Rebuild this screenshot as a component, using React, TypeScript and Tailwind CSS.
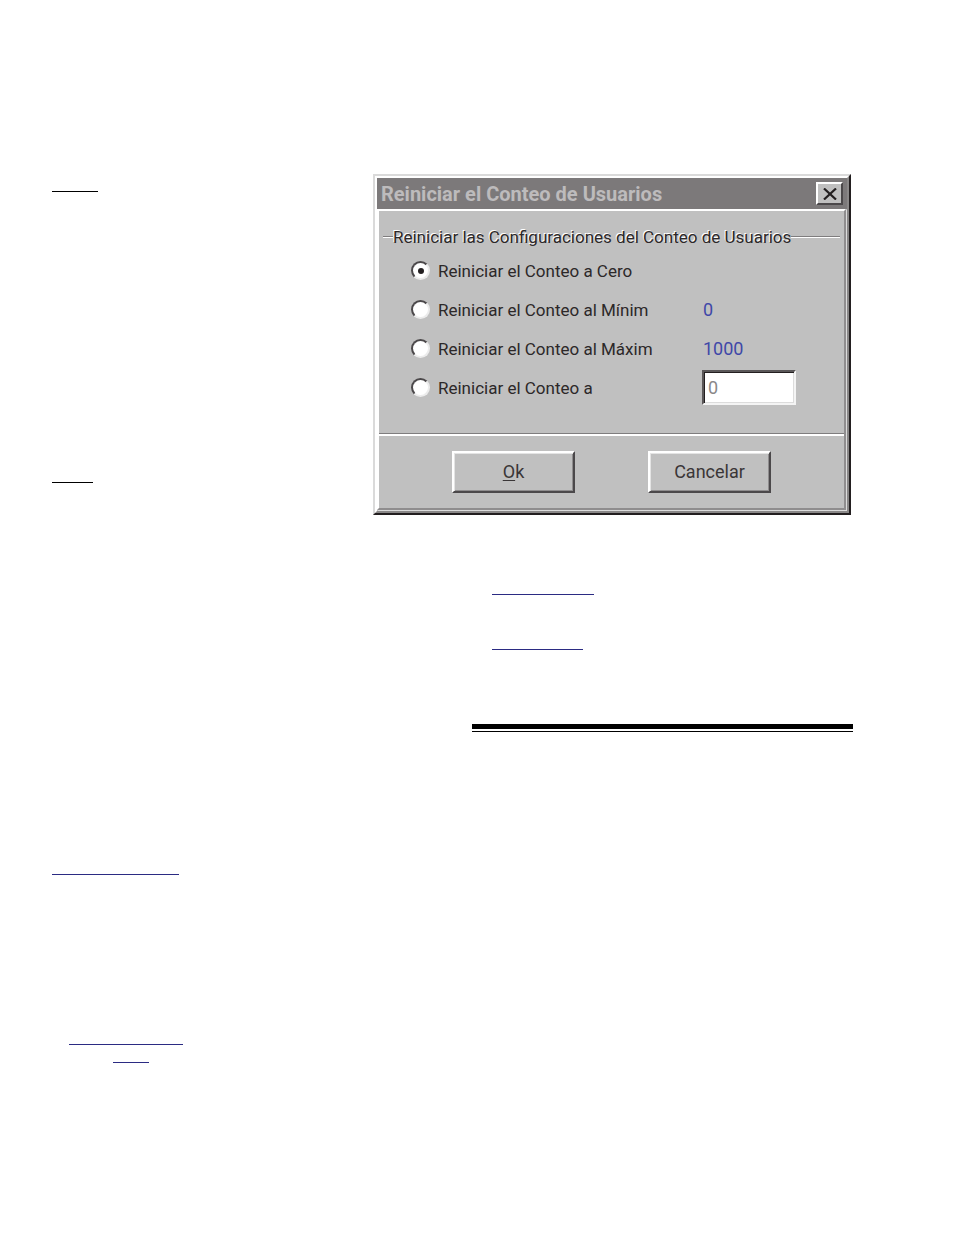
import { useState } from 'react';

const options = [
  { id: 'zero', label: 'Reiniciar el Conteo a Cero' },
  { id: 'min', label: 'Reiniciar el Conteo al Mínim', value: '0' },
  { id: 'max', label: 'Reiniciar el Conteo al Máxim', value: '1000' },
  { id: 'custom', label: 'Reiniciar el Conteo a' },
];

const buttonClass =
  'h-[42px] w-[123px] border-2 border-t-white border-l-white border-r-[#4b484a] border-b-[#4b484a] bg-[#c0c0c0] text-[18px] leading-6 text-[#3a3637] shadow-[inset_1px_1px_0_#e4e4e4,inset_-1px_-1px_0_#8f8d8e]';

const ResetDialog = () => {
  const [selected, setSelected] = useState('zero');
  const [custom, setCustom] = useState('0');

  return (
    <section
      role="dialog"
      aria-labelledby="dialog-title"
      className="mr-0.5 border-2 border-t-[#dadada] border-r-[#231f20] border-b-[#231f20] border-l-[#dadada] bg-[#c0c0c0] font-['Roboto',sans-serif] text-[17px] leading-6 text-[#2c2829]"
    >
      <div className="border-2 border-t-white border-r-[#8a8888] border-b-[#8a8888] border-l-white">
        <header className="flex h-[31px] items-center justify-between bg-[#7c797a] pr-1 pl-1">
          <h1 id="dialog-title" className="text-[20px] font-bold text-[#bdbbbc]">
            Reiniciar el Conteo de Usuarios
          </h1>
          <button
            type="button"
            aria-label="Cerrar"
            className="grid h-[23px] w-[27px] place-items-center border-2 border-t-white border-r-[#4b484a] border-b-[#4b484a] border-l-white bg-[#c0c0c0]"
          >
            <svg viewBox="0 0 14 12" className="h-3 w-3.5" stroke="#231f20" strokeWidth="2.2" aria-hidden="true">
              <path d="M1 0.5 L13 11.5 M13 0.5 L1 11.5" />
            </svg>
          </button>
        </header>

        <div className="mr-px mb-px border-2 border-t-white border-r-[#8f8d8e] border-b-[#8f8d8e] border-l-white shadow-[1px_1px_0_#dcdcdc]">
          <fieldset className="h-[222px] min-w-0 pt-3.5">
            <legend className="float-left flex h-6 w-full items-center pr-1 pl-1">
              <span className="h-0.5 w-2.5 border-t border-[#7f7d7e] bg-white" />
              <span className="whitespace-nowrap [text-shadow:-1px_-1px_0_#fff]">
                Reiniciar las Configuraciones del Conteo de Usuarios
              </span>
              <span className="h-0.5 flex-1 border-t border-[#7f7d7e] bg-white" />
            </legend>
            <div className="clear-both pt-0.5 pl-8">
              {options.map((option) => (
                <div key={option.id} className="flex h-[39px] items-center">
                  <input
                    type="radio"
                    name="reset"
                    id={option.id}
                    checked={selected === option.id}
                    onChange={() => setSelected(option.id)}
                    className="mr-2 grid size-[19px] shrink-0 appearance-none place-items-center rounded-full border-2 border-t-[#4b484a] border-r-[#ececec] border-b-[#ececec] border-l-[#4b484a] bg-white before:size-1.5 before:rounded-full checked:before:bg-[#231f20]"
                  />
                  <label htmlFor={option.id} className="w-[215px] whitespace-nowrap">
                    {option.label}
                  </label>
                  {option.value && <output className="ml-[50px] text-[18px] text-[#3f48a8]">{option.value}</output>}
                  {option.id === 'custom' && (
                    <input
                      type="text"
                      aria-label="Valor del conteo"
                      value={custom}
                      onChange={(e) => setCustom(e.target.value)}
                      className="ml-[49px] h-[35px] w-[94px] border-2 border-t-[#5a5758] border-r-[#f4f4f4] border-b-[#f4f4f4] border-l-[#5a5758] bg-white px-1 text-[18px] text-[#8a8888] shadow-[inset_1px_1px_0_#231f20,inset_-1px_-1px_0_#dcdcdc]"
                    />
                  )}
                </div>
              ))}
            </div>
          </fieldset>
          <hr className="h-[3px] border-t border-[#7f7d7e] bg-white" />
          <footer className="flex h-[72px] items-center justify-evenly">
            <button type="button" className={buttonClass}>
              <u className="underline-offset-2">O</u>k
            </button>
            <button type="button" className={buttonClass}>
              Cancelar
            </button>
          </footer>
        </div>
      </div>
    </section>
  );
};

const App = () => (
  <main className="grid min-h-screen grid-cols-[321px_minmax(0,1fr)] bg-white pr-[101px] pl-[52px]">
    <aside className="pt-[191px]">
      <hr className="h-px w-[46px] border-0 bg-black" />
      <hr className="mt-[290px] h-px w-[41px] border-0 bg-black" />
      <hr className="mt-[391px] h-px w-[127px] border-0 bg-[#2b2b83]" />
      <hr className="mt-[169px] ml-[17px] h-px w-[114px] border-0 bg-[#2b2b83]" />
      <hr className="mt-[17px] ml-[61px] h-px w-9 border-0 bg-[#2b2b83]" />
    </aside>
    <div className="pt-[174px]">
      <ResetDialog />
      <hr className="mt-[79px] ml-[119px] h-px w-[102px] border-0 bg-[#2b2b83]" />
      <hr className="mt-[54px] ml-[119px] h-px w-[91px] border-0 bg-[#2b2b83]" />
      <hr className="mt-[74px] ml-[99px] h-[5px] border-0 bg-black" />
      <hr className="mt-0.5 ml-[99px] h-px border-0 bg-black" />
    </div>
  </main>
);

export default App;
